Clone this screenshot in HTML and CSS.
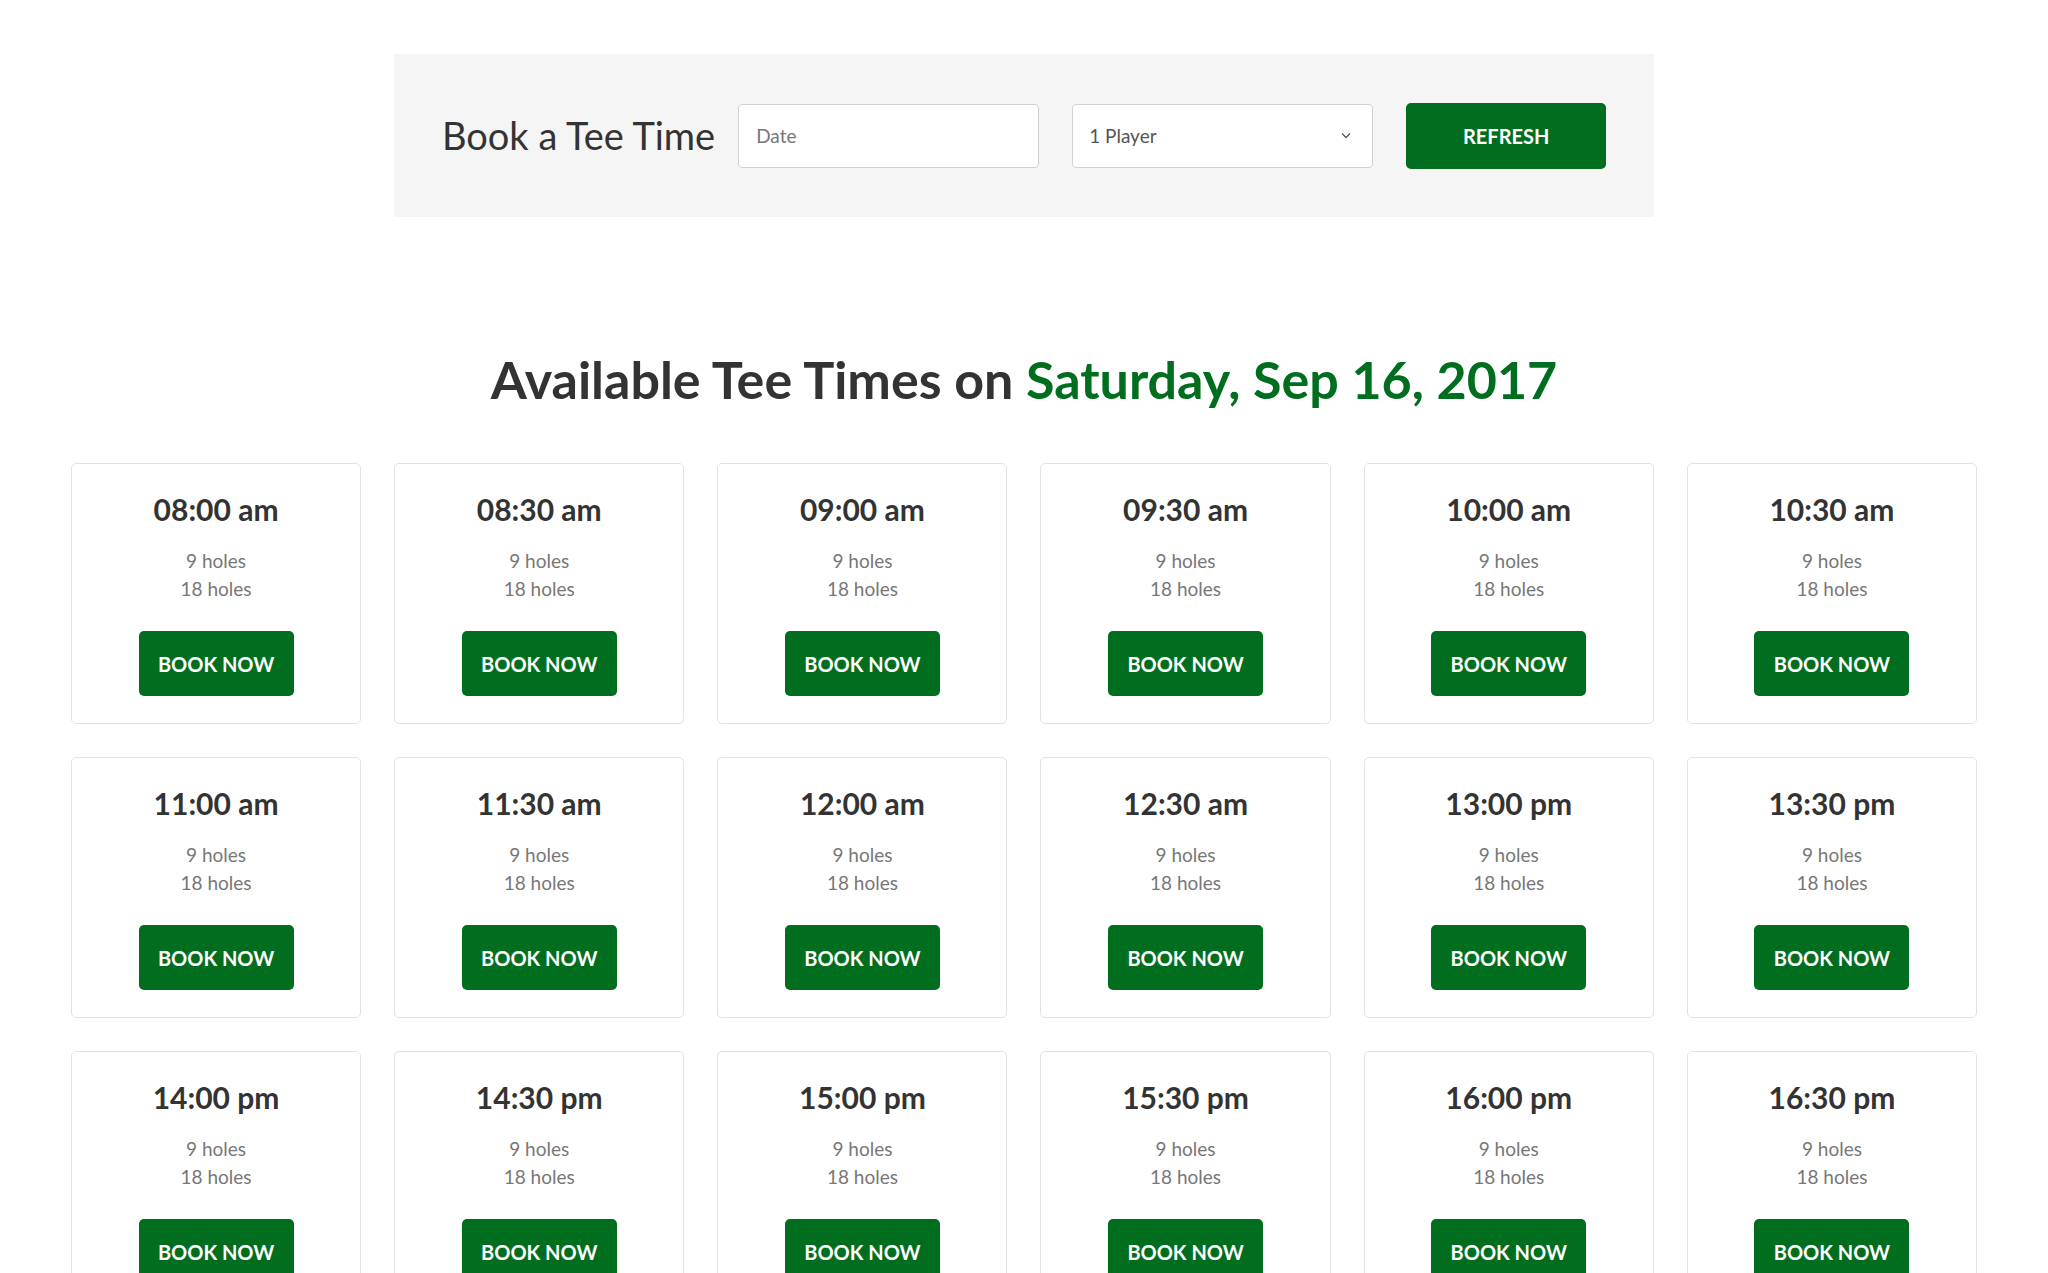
FILE: index.html
```html
<!DOCTYPE html>
<html lang="en">
<head>
<meta charset="utf-8">
<title>Book a Tee Time</title>
<link rel="stylesheet" href="styles.css">
</head>
<body>
<section class="search-panel">
  <h1 class="search-title">Book a Tee Time</h1>
  <input class="field date-field" type="text" placeholder="Date">
  <div class="field select-field">
    <span>1 Player</span>
    <svg class="chevron" width="10" height="7" viewBox="0 0 10 7"><path d="M1 1.5 L5 5.5 L9 1.5" fill="none" stroke="#555" stroke-width="1.3"/></svg>
  </div>
  <button class="btn refresh-btn">REFRESH</button>
</section>

<h2 class="avail-title">Available Tee Times on <span class="avail-date">Saturday, Sep 16, 2017</span></h2>

<main class="slots">
  <div class="slot"><div class="slot-time">08:00 am</div><div class="slot-holes">9 holes<br>18 holes</div><button class="btn book-btn">BOOK NOW</button></div>
  <div class="slot"><div class="slot-time">08:30 am</div><div class="slot-holes">9 holes<br>18 holes</div><button class="btn book-btn">BOOK NOW</button></div>
  <div class="slot"><div class="slot-time">09:00 am</div><div class="slot-holes">9 holes<br>18 holes</div><button class="btn book-btn">BOOK NOW</button></div>
  <div class="slot"><div class="slot-time">09:30 am</div><div class="slot-holes">9 holes<br>18 holes</div><button class="btn book-btn">BOOK NOW</button></div>
  <div class="slot"><div class="slot-time">10:00 am</div><div class="slot-holes">9 holes<br>18 holes</div><button class="btn book-btn">BOOK NOW</button></div>
  <div class="slot"><div class="slot-time">10:30 am</div><div class="slot-holes">9 holes<br>18 holes</div><button class="btn book-btn">BOOK NOW</button></div>
  <div class="slot"><div class="slot-time">11:00 am</div><div class="slot-holes">9 holes<br>18 holes</div><button class="btn book-btn">BOOK NOW</button></div>
  <div class="slot"><div class="slot-time">11:30 am</div><div class="slot-holes">9 holes<br>18 holes</div><button class="btn book-btn">BOOK NOW</button></div>
  <div class="slot"><div class="slot-time">12:00 am</div><div class="slot-holes">9 holes<br>18 holes</div><button class="btn book-btn">BOOK NOW</button></div>
  <div class="slot"><div class="slot-time">12:30 am</div><div class="slot-holes">9 holes<br>18 holes</div><button class="btn book-btn">BOOK NOW</button></div>
  <div class="slot"><div class="slot-time">13:00 pm</div><div class="slot-holes">9 holes<br>18 holes</div><button class="btn book-btn">BOOK NOW</button></div>
  <div class="slot"><div class="slot-time">13:30 pm</div><div class="slot-holes">9 holes<br>18 holes</div><button class="btn book-btn">BOOK NOW</button></div>
  <div class="slot"><div class="slot-time">14:00 pm</div><div class="slot-holes">9 holes<br>18 holes</div><button class="btn book-btn">BOOK NOW</button></div>
  <div class="slot"><div class="slot-time">14:30 pm</div><div class="slot-holes">9 holes<br>18 holes</div><button class="btn book-btn">BOOK NOW</button></div>
  <div class="slot"><div class="slot-time">15:00 pm</div><div class="slot-holes">9 holes<br>18 holes</div><button class="btn book-btn">BOOK NOW</button></div>
  <div class="slot"><div class="slot-time">15:30 pm</div><div class="slot-holes">9 holes<br>18 holes</div><button class="btn book-btn">BOOK NOW</button></div>
  <div class="slot"><div class="slot-time">16:00 pm</div><div class="slot-holes">9 holes<br>18 holes</div><button class="btn book-btn">BOOK NOW</button></div>
  <div class="slot"><div class="slot-time">16:30 pm</div><div class="slot-holes">9 holes<br>18 holes</div><button class="btn book-btn">BOOK NOW</button></div>
</main>
</body>
</html>
```

FILE: styles.css
```css
* { box-sizing: border-box; }

body {
  margin: 0;
  background: #ffffff;
  font-family: Lato, "Open Sans", "Liberation Sans", sans-serif;
  color: #333333;
}

.search-panel {
  width: 1260px;
  height: 163px;
  margin: 54px auto 0;
  padding: 0 48px 0 50px;
  background: #f5f5f5;
  display: flex;
  align-items: center;
}

.search-title {
  flex: 0 0 auto;
  white-space: nowrap;
  margin: 0 23px 0 -2px;
  font-size: 38px;
  font-weight: 400;
  color: #333333;
  line-height: 1.2;
}

.field {
  flex: 0 0 301px;
  width: 301px;
  height: 64px;
  border: 1px solid #d2d2d2;
  border-radius: 4px;
  background: #ffffff;
  font-family: inherit;
  font-size: 19px;
  color: #666666;
  padding: 0 17px;
}

.date-field::placeholder { color: #777777; }
.date-field { outline: none; }

.select-field {
  margin-left: 33px;
  display: flex;
  align-items: center;
  justify-content: space-between;
  padding: 0 21px 0 16px;
  color: #555555;
}

.btn {
  border: none;
  background: #006e1e;
  color: #ffffff;
  font-family: inherit;
  font-weight: 700;
  cursor: pointer;
}

.refresh-btn {
  flex: 0 0 200px;
  margin-left: 33px;
  width: 200px;
  height: 66px;
  border-radius: 5px;
  font-size: 20px;
}

.avail-title {
  margin: 131px 0 0;
  text-align: center;
  font-size: 52px;
  font-weight: 700;
  line-height: 1.2;
  color: #333333;
}

.avail-date { color: #006e1e; }

.slots {
  width: 1906px;
  margin: 53px auto 0;
  display: grid;
  grid-template-columns: repeat(6, 1fr);
  column-gap: 33px;
  row-gap: 33px;
}

.slot {
  height: 261px;
  border: 1px solid #e2e2e2;
  border-radius: 5px;
  padding: 27px 0 0;
  display: flex;
  flex-direction: column;
  align-items: center;
  text-align: center;
}

.slot-time {
  font-size: 30px;
  font-weight: 700;
  line-height: 36px;
  color: #333333;
}

.slot-holes {
  margin-top: 20px;
  font-size: 19px;
  line-height: 28px;
  color: #777777;
}

.book-btn {
  margin-top: 28px;
  width: 155px;
  height: 65px;
  border-radius: 5px;
  font-size: 20px;
}
```
